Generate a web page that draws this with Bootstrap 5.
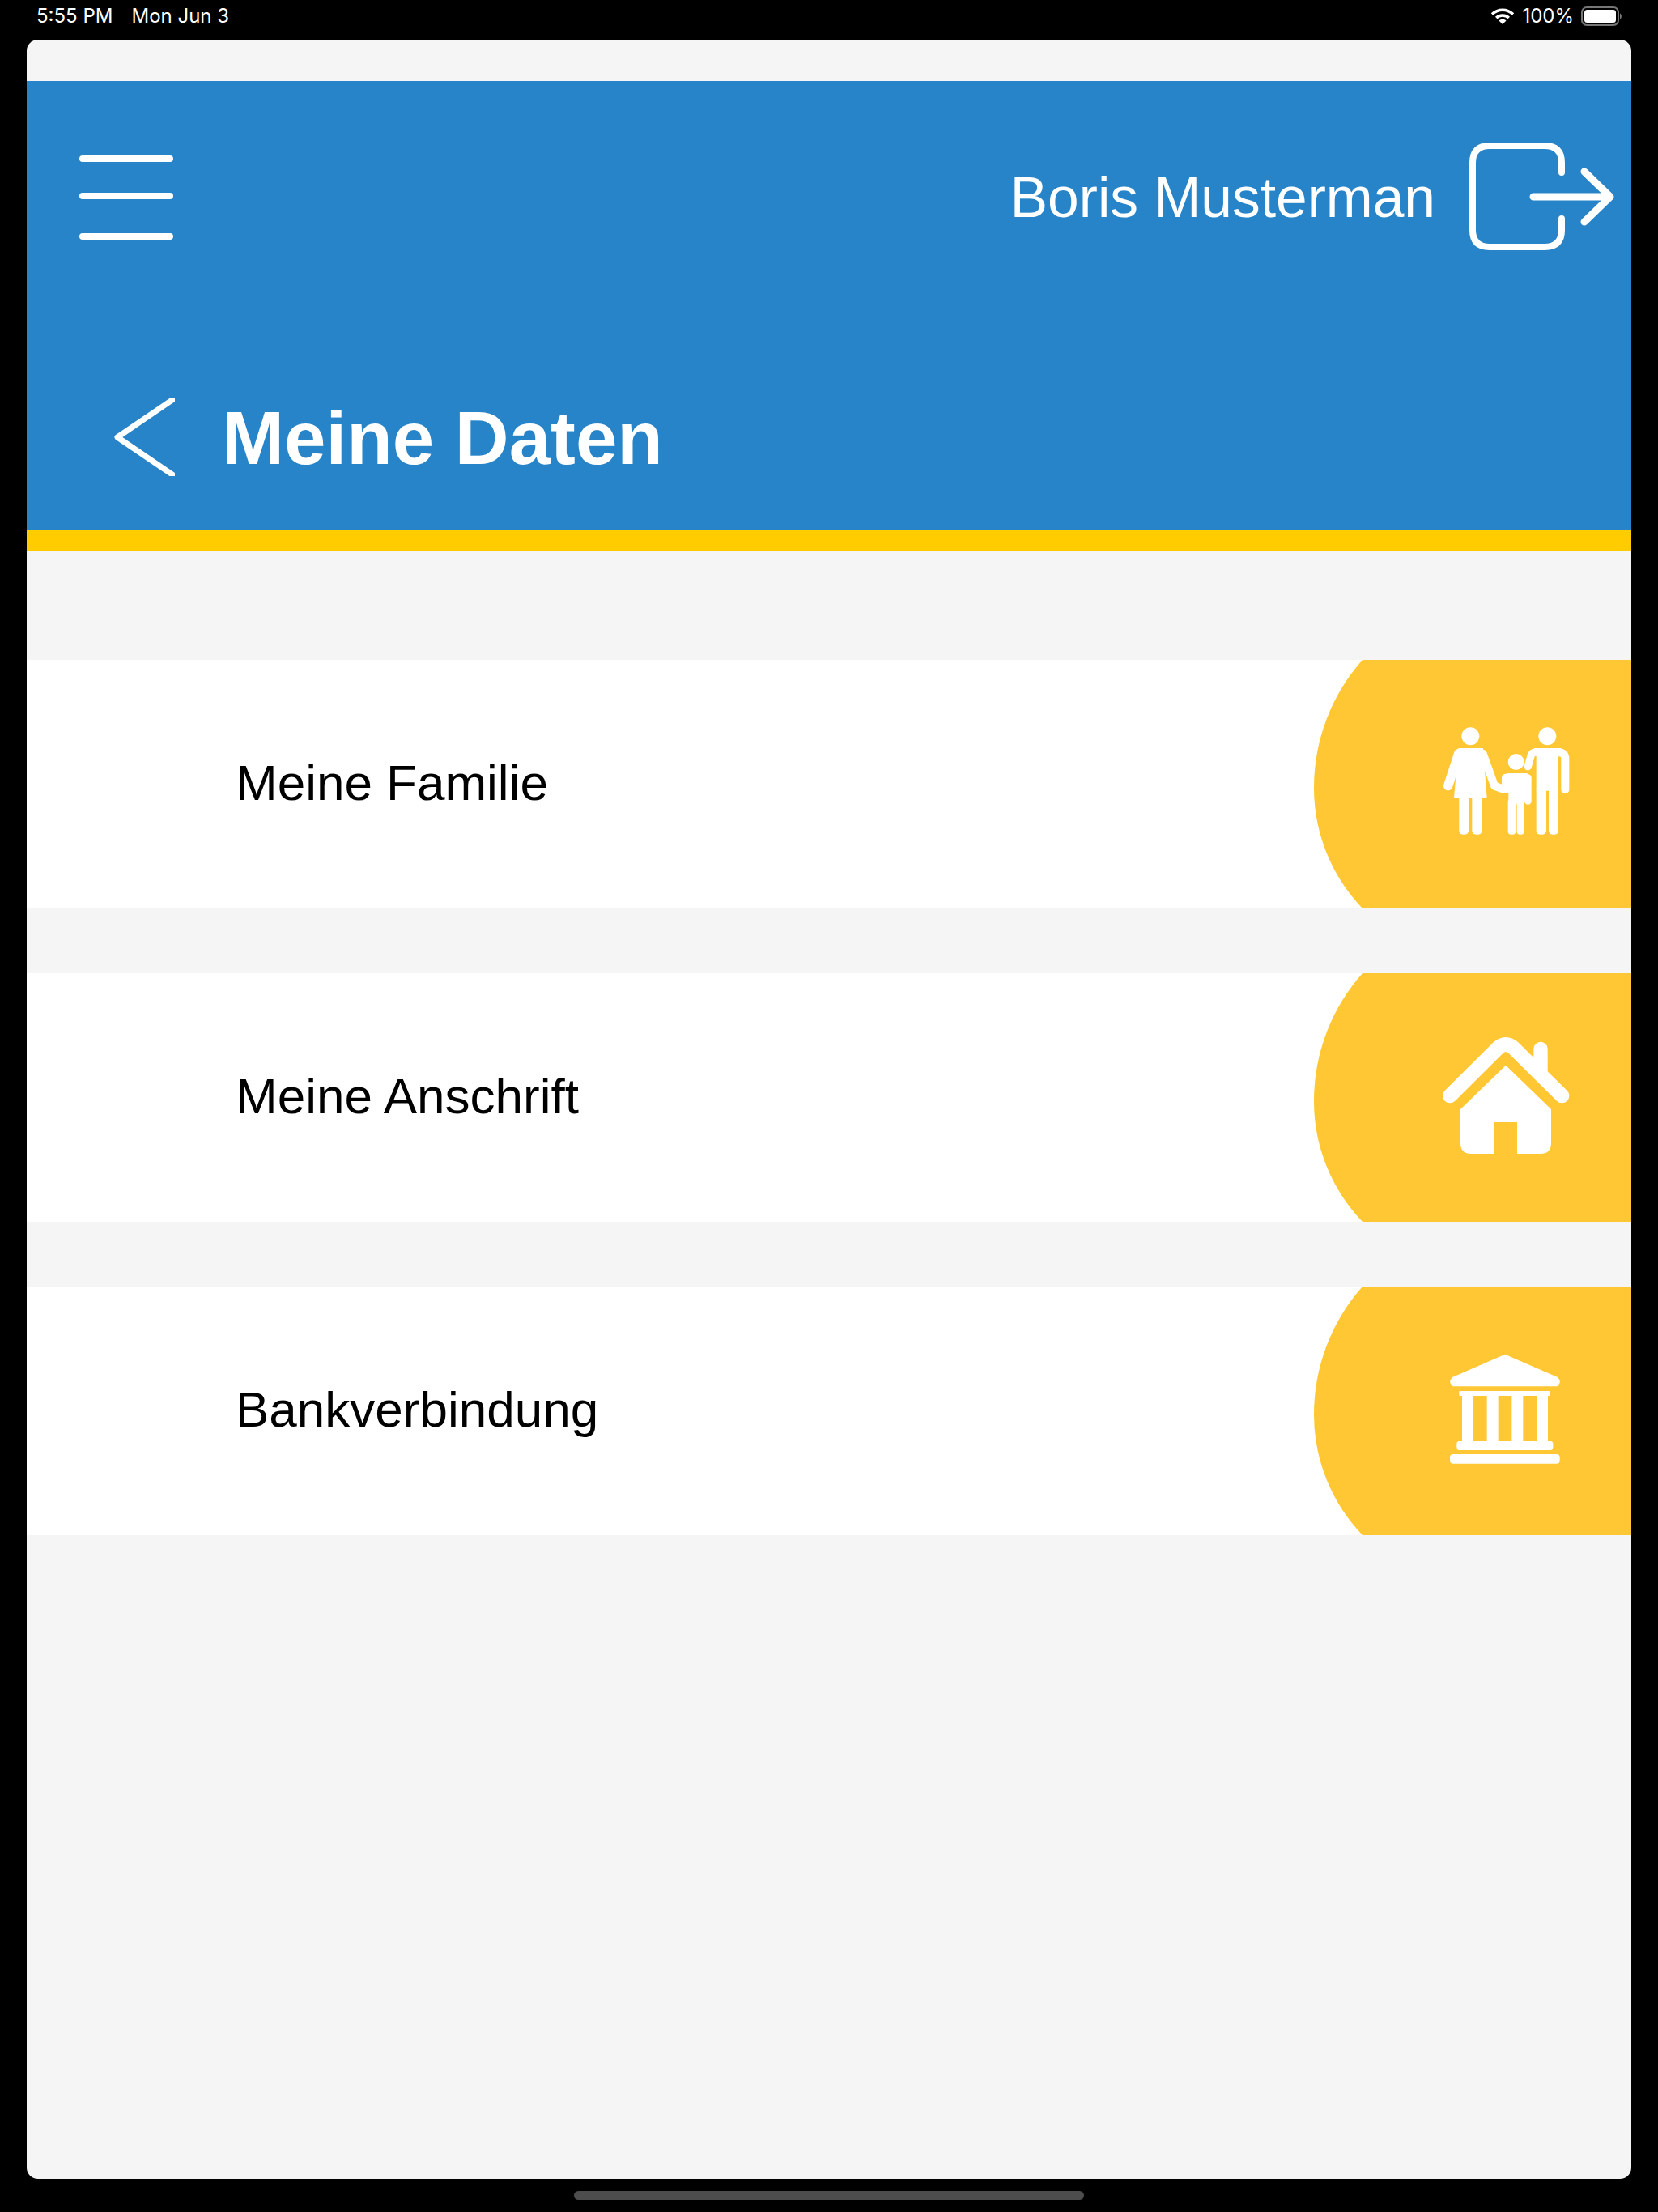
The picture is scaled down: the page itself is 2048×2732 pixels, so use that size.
<!DOCTYPE html>
<html lang="de">
<head>
    <meta charset="UTF-8">
    <meta name="viewport" content="width=device-width, initial-scale=1.0">
    <title>Meine Daten</title>
    <link href="https://cdn.jsdelivr.net/npm/bootstrap@5.3.1/dist/css/bootstrap.min.css" rel="stylesheet">
    <style>
        html, body { height: 100%; }
        body { background: #000; font-family: "Liberation Sans", Arial, sans-serif; overflow: hidden; }
        .status-bar { height: 49px; padding: 0 43px 9px 45px; color: #fff; font-family: Inter, "Liberation Sans", sans-serif; font-size: 24px; line-height: 1; }
        .status-date { margin-left: 23px; }
        .status-pct { margin: 0 9px 0 9px; }
        .screen { height: 2642px; margin: 0 33px; background: #f5f5f5; border-radius: 14px; padding-top: 51px; overflow: hidden; }
        .app-head { background: #2784c8; color: #fff; border-bottom: 26px solid #ffcc00; padding: 76px 20px 68px 0; height: 581px; }
        .menu-btn { margin-left: 65px; }
        .user-name { font-size: 69.500px; line-height: 1; margin: 4px 42px 0 0; }
        .title-row { margin-top: 183px; padding-left: 108px; }
        .page-title { font-size: 92.500px; font-weight: 700; line-height: 1; margin: 3px 0 0 58px; }
        .rows { padding-top: 134px; gap: 80px; }
        .rows .list-group-item { height: 307px; padding-left: 258px; color: #000; background: #fff; font-size: 62px; line-height: 1; }
        .row-label { margin-top: -3px; }
        .home-bar { width: 630px; height: 11px; margin: 15px auto 0; background: #4d4d4d; border-radius: 6px; }
    </style>
</head>
<body>
    <div class="status-bar d-flex align-items-center">
        <span>5:55 PM</span>
        <span class="status-date">Mon Jun 3</span>
        <div class="ms-auto d-flex align-items-center">
            <svg width="30" height="20" viewBox="0 0 30 20">
                <path d="M2 7.5C9.500 .5 20.500 .5 28 7.500" fill="none" stroke="#fff" stroke-width="3.600"/>
                <path d="M7.200 12C11.500 8 18.500 8 22.800 12" fill="none" stroke="#fff" stroke-width="3.600"/>
                <path d="M15 20L10.500 15.500C13 13.300 17 13.300 19.500 15.500Z" fill="#fff"/>
            </svg>
            <span class="status-pct">100%</span>
            <svg width="52" height="24" viewBox="0 0 52 24">
                <rect x="1" y="1" width="45" height="22" rx="6" fill="none" stroke="#777" stroke-width="2"/>
                <rect x="4" y="4" width="39" height="16" rx="3.500" fill="#fff"/>
                <path d="M48 8.500C50.500 9.500 50.500 14.500 48 15.500Z" fill="#777"/>
            </svg>
        </div>
    </div>

    <div class="screen">
        <div class="app-head">
            <div class="d-flex align-items-center">
                <svg class="menu-btn" width="116" height="106" viewBox="0 0 116 106">
                    <path d="M4 6H112M4 52H112M4 102H112" stroke="#fff" stroke-width="8" stroke-linecap="round"/>
                </svg>
                <span class="user-name ms-auto">Boris Musterman</span>
                <svg width="180" height="133" viewBox="0 0 180 133">
                    <path d="M114 37V25Q114 4 93 4H25Q4 4 4 25V108Q4 129 25 129H93Q114 129 114 108V94" fill="none" stroke="#fff" stroke-width="8" stroke-linecap="round"/>
                    <path d="M79 67H174M142 36L174 67L142 98" fill="none" stroke="#fff" stroke-width="9" stroke-linecap="round" stroke-linejoin="round"/>
                </svg>
            </div>
            <div class="title-row d-flex align-items-center">
                <svg width="75" height="96" viewBox="0 0 75 96">
                    <path d="M82 -5L4 48L82 101" fill="none" stroke="#fff" stroke-width="7" stroke-linejoin="round"/>
                </svg>
                <h1 class="page-title">Meine Daten</h1>
            </div>
        </div>

        <div class="rows list-group rounded-0">
            <a class="list-group-item border-0 rounded-0 d-flex align-items-center justify-content-between pe-0 py-0" href="#">
                <span class="row-label">Meine Familie</span>
                <svg width="392" height="307" viewBox="0 0 392 307">
                    <path d="M60 0H392V307H60A215 215 0 0 1 0 158A238 238 0 0 1 60 0Z" fill="#ffc733"/>
                    <g transform="translate(-23 -15) scale(.33333)" fill="#fff" stroke="#fff">
                        <g stroke="none">
                            <circle cx="649" cy="328" r="33"/>
                            <path d="M604 372H696L710 557H588Z"/>
                            <rect x="607" y="540" width="35" height="152" rx="14"/>
                            <rect x="655" y="540" width="37" height="152" rx="14"/>
                            <circle cx="818" cy="423" r="30"/>
                            <path d="M782 465H860V540H848V580H790V540H782Z"/>
                            <rect x="788" y="560" width="29" height="132" rx="12"/>
                            <rect x="821" y="560" width="27" height="132" rx="12"/>
                            <circle cx="934" cy="328" r="33"/>
                            <path d="M885 372H985V400H975V530H893V400H885Z"/>
                            <rect x="893" y="510" width="37" height="182" rx="14"/>
                            <rect x="939" y="510" width="36" height="182" rx="14"/>
                        </g>
                        <g fill="none" stroke-linecap="round" stroke-linejoin="round">
                            <path d="M605 392L566 512" stroke-width="34"/>
                            <path d="M695 392L738 512L772 524" stroke-width="30"/>
                            <path d="M780 482V525" stroke-width="30"/>
                            <path d="M862 482V568" stroke-width="26"/>
                            <path d="M893 388Q876 385 872 405L862 440" stroke-width="28"/>
                            <path d="M975 388Q1000 388 1000 410V526" stroke-width="30"/>
                        </g>
                    </g>
                </svg>
            </a>
            <a class="list-group-item border-0 rounded-0 d-flex align-items-center justify-content-between pe-0 py-0" href="#">
                <span class="row-label">Meine Anschrift</span>
                <svg width="392" height="307" viewBox="0 0 392 307">
                    <path d="M60 0H392V307H60A215 215 0 0 1 0 158A238 238 0 0 1 60 0Z" fill="#ffc733"/>
                    <g transform="translate(-23 -12) scale(.33333)" fill="#fff">
                        <path d="M573 490L750 314Q780 286 810 314L988 490" fill="none" stroke="#fff" stroke-width="54" stroke-linecap="round"/>
                        <path d="M883 350V316A26 26 0 0 1 935 316V410Z"/>
                        <path d="M780 377L948 540V665Q948 705 908 705H822V588H738V705H652Q612 705 612 665V540Z"/>
                    </g>
                </svg>
            </a>
            <a class="list-group-item border-0 rounded-0 d-flex align-items-center justify-content-between pe-0 py-0" href="#">
                <span class="row-label">Bankverbindung</span>
                <svg width="392" height="307" viewBox="0 0 392 307">
                    <path d="M60 0H392V307H60A215 215 0 0 1 0 158A238 238 0 0 1 60 0Z" fill="#ffc733"/>
                    <g transform="translate(-23 -9) scale(.33333)" fill="#fff">
                        <path d="M777 278L972 363Q990 380 970 397H584Q564 380 582 363Z"/>
                        <rect x="607" y="414" width="338" height="18" rx="4"/>
                        <rect x="618" y="430" width="42" height="172"/>
                        <rect x="710" y="430" width="42" height="172"/>
                        <rect x="802" y="430" width="42" height="172"/>
                        <rect x="894" y="430" width="42" height="172"/>
                        <rect x="598" y="600" width="357" height="33" rx="10"/>
                        <rect x="573" y="648" width="407" height="35" rx="12"/>
                    </g>
                </svg>
            </a>
        </div>
    </div>
    <div class="home-bar"></div>
</body>
</html>
